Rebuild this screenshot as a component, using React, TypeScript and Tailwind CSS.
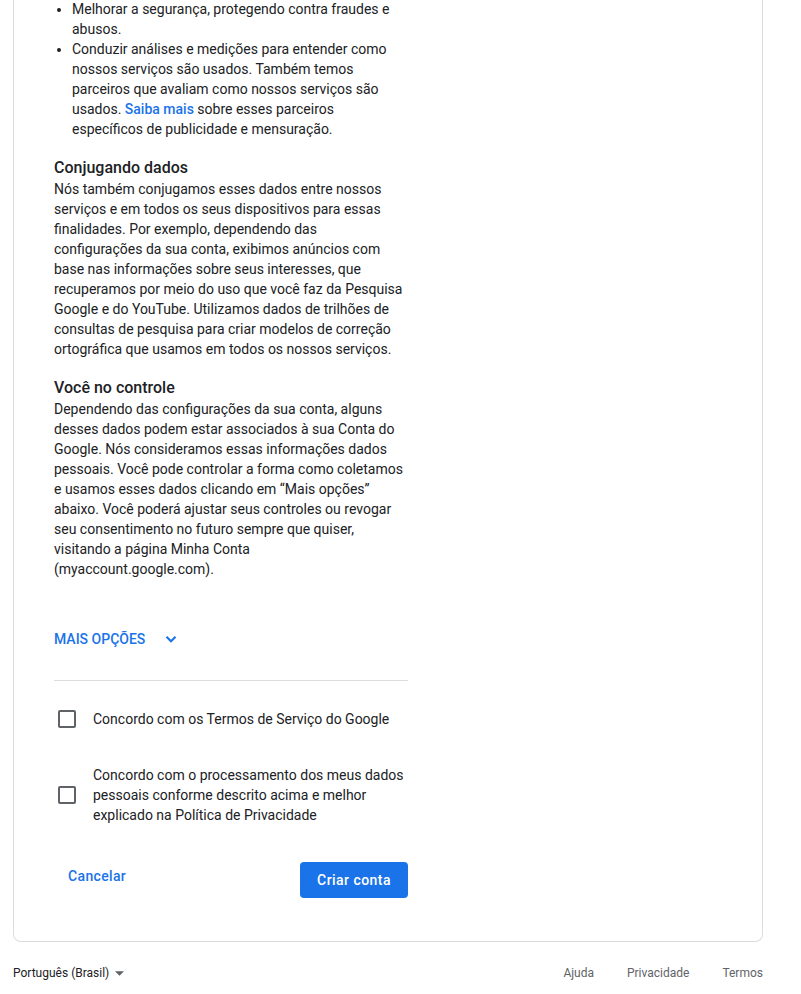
import React, { useState } from "react";

const font = { fontFamily: "Roboto, 'Noto Sans', Arial, sans-serif" };

function Checkbox({ checked, onChange }: { checked: boolean; onChange: () => void }) {
  return (
    <button
      onClick={onChange}
      className={`shrink-0 w-[18px] h-[18px] rounded-[2px] border-2 flex items-center justify-center ${
        checked ? "bg-[#1a73e8] border-[#1a73e8]" : "bg-white border-[#5f6368]"
      }`}
    >
      {checked && (
        <svg viewBox="0 0 24 24" className="w-[14px] h-[14px]" fill="none" stroke="white" strokeWidth="3">
          <path d="M4 12l5 5L20 6" />
        </svg>
      )}
    </button>
  );
}

export default function App() {
  const [terms, setTerms] = useState(false);
  const [privacy, setPrivacy] = useState(false);
  const [open, setOpen] = useState(false);

  return (
    <div className="min-h-[994px] bg-white text-[#202124] overflow-hidden" style={font}>
      <div className="ml-[13px] w-[750px]">
        {/* Card (top scrolled out of view) */}
        <div className="border-x border-b border-[#dadce0] rounded-b-[8px] pl-[40px] pr-[40px] pb-[43px]">
          <div className="w-[354px] -mt-[1px] text-[14px] leading-[20px]">
            <ul className="list-disc pl-[18px] marker:text-[#202124]">
              <li>Melhorar a segurança, protegendo contra fraudes e abusos.</li>
              <li>
                Conduzir análises e medições para entender como nossos serviços são usados. Também temos
                parceiros que avaliam como nossos serviços são usados.{" "}
                <a className="text-[#1a73e8] font-medium">Saiba mais</a> sobre esses parceiros específicos de
                publicidade e mensuração.
              </li>
            </ul>

            <h2 className="mt-[18px] text-[16px] leading-[22px] font-medium">Conjugando dados</h2>
            <p>
              Nós também conjugamos esses dados entre nossos serviços e em todos os seus dispositivos para essas
              finalidades. Por exemplo, dependendo das configurações da sua conta, exibimos anúncios com base nas
              informações sobre seus interesses, que recuperamos por meio do uso que você faz da Pesquisa Google e
              do YouTube. Utilizamos dados de trilhões de consultas de pesquisa para criar modelos de correção
              ortográfica que usamos em todos os nossos serviços.
            </p>

            <h2 className="mt-[18px] text-[16px] leading-[22px] font-medium">Você no controle</h2>
            <p>
              Dependendo das configurações da sua conta, alguns desses dados podem estar associados à sua Conta do
              Google. Nós consideramos essas informações dados pessoais. Você pode controlar a forma como coletamos
              e usamos esses dados clicando em “Mais opções” abaixo. Você poderá ajustar seus controles ou revogar
              seu consentimento no futuro sempre que quiser, visitando a página Minha Conta (myaccount.google.com).
            </p>

            <button
              onClick={() => setOpen(!open)}
              className="mt-[50px] flex items-center text-[#1a73e8] text-[14px] leading-[20px] font-medium uppercase"
            >
              <span>Mais opções</span>
              <svg
                viewBox="0 0 24 24"
                className={`ml-[17px] w-[18px] h-[18px] ${open ? "rotate-180" : ""}`}
                fill="none"
                stroke="#1a73e8"
                strokeWidth="2.8"
              >
                <path d="M6 9l6 6 6-6" />
              </svg>
            </button>

            <div className="mt-[31px] border-t border-[#dadce0]" />

            <div className="mt-[28px] flex items-center">
              <div className="w-[39px] pl-[4px]">
                <Checkbox checked={terms} onChange={() => setTerms(!terms)} />
              </div>
              <span>Concordo com os Termos de Serviço do Google</span>
            </div>

            <div className="mt-[36px] flex items-center">
              <div className="w-[39px] pl-[4px]">
                <Checkbox checked={privacy} onChange={() => setPrivacy(!privacy)} />
              </div>
              <span className="w-[315px]">
                Concordo com o processamento dos meus dados pessoais conforme descrito acima e melhor explicado na
                Política de Privacidade
              </span>
            </div>

            <div className="mt-[37px] flex items-center justify-between">
              <button className="ml-[14px] -mt-[8px] text-[#1a73e8] text-[14px] font-medium tracking-[0.35px]">
                Cancelar
              </button>
              <button className="w-[108px] h-[36px] rounded-[4px] bg-[#1a73e8] text-white text-[14px] font-medium tracking-[0.45px]">
                Criar conta
              </button>
            </div>
          </div>
        </div>

        {/* Footer */}
        <div className="mt-[23px] flex items-center justify-between text-[12px] leading-[16px] text-[#202124]">
          <div className="flex items-center">
            <span>Português (Brasil)</span>
            <svg viewBox="0 0 10 5" className="ml-[6px] w-[9px] h-[5px]" fill="#5f6368">
              <path d="M0 0l5 5 5-5z" />
            </svg>
          </div>
          <div className="flex items-center gap-[33px] text-[#5f6368]">
            <a>Ajuda</a>
            <a>Privacidade</a>
            <a>Termos</a>
          </div>
        </div>
      </div>
    </div>
  );
}
